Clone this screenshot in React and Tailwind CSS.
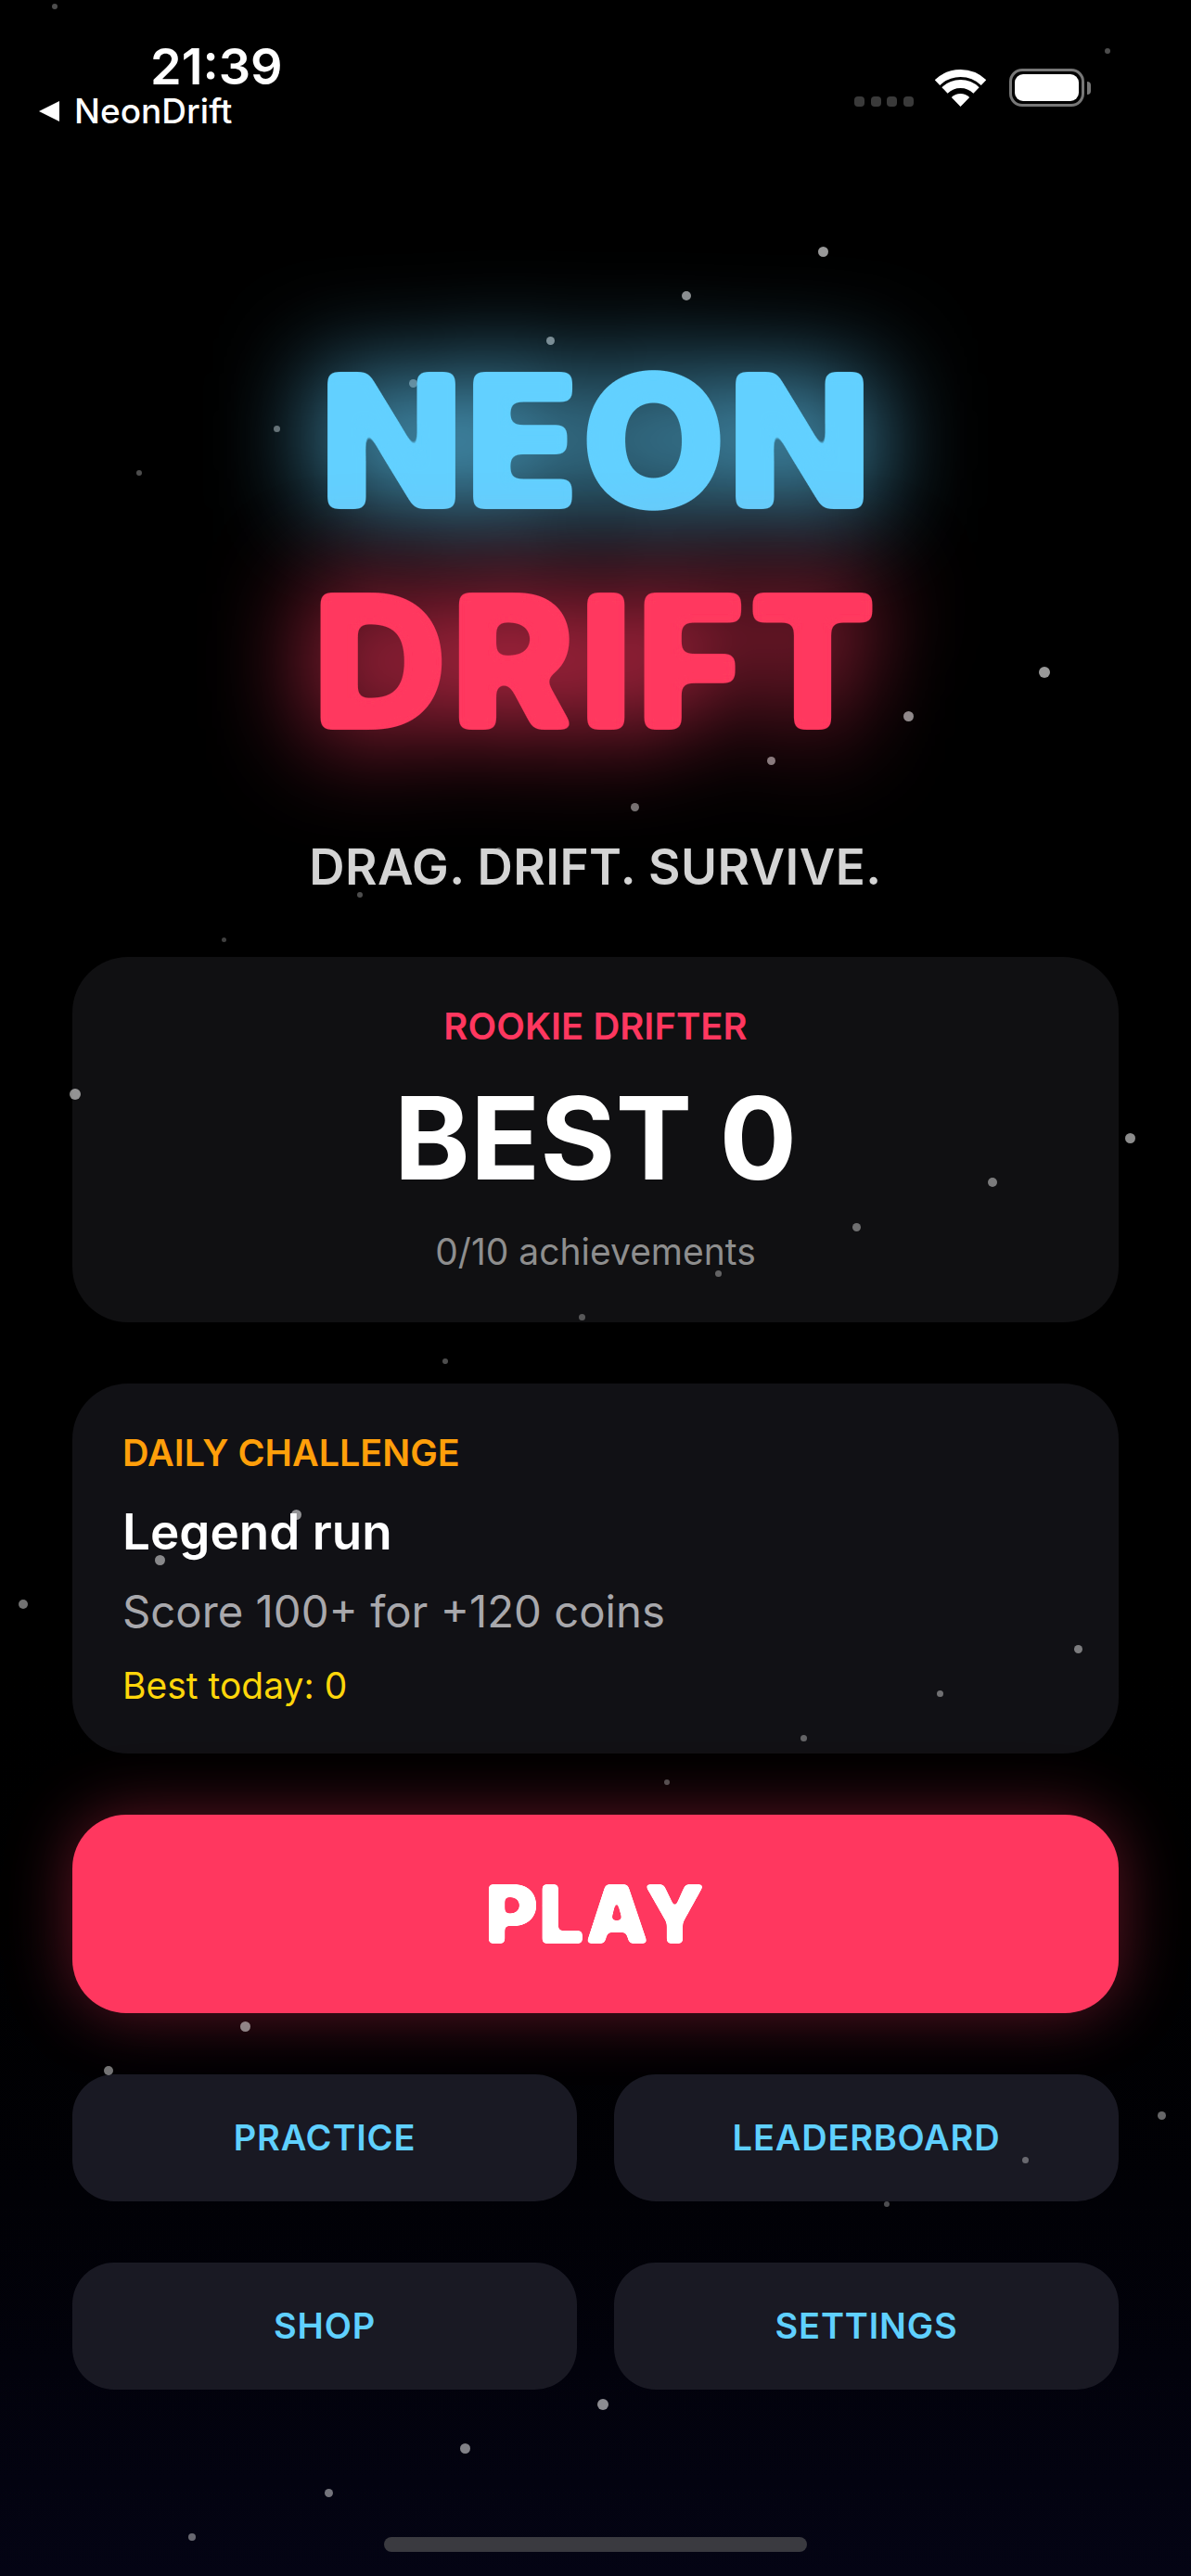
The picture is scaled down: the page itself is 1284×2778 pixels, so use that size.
import React from 'react';

const sans = "font-['Inter','Liberation_Sans',sans-serif]";

// [x, y, diameter, opacity] in page pixels
const dots = [
  [59, 7, 6, 0.3], [1194, 55, 6, 0.3], [887, 271, 11, 0.6], [740, 319, 10, 0.55], [593, 367, 9, 0.5],
  [445, 413, 9, 0.4], [298, 462, 7, 0.4], [150, 510, 6, 0.3], [1126, 725, 12, 0.6], [979, 772, 11, 0.55],
  [831, 820, 9, 0.5], [684, 870, 9, 0.45], [537, 917, 7, 0.35], [388, 965, 6, 0.3], [241, 1013, 5, 0.25],
  [81, 1180, 12, 0.55], [1218, 1227, 11, 0.55], [1070, 1275, 10, 0.45], [923, 1323, 9, 0.4], [774, 1373, 7, 0.35],
  [627, 1420, 7, 0.3], [480, 1468, 6, 0.3], [319, 1633, 11, 0.55], [172, 1682, 11, 0.5], [25, 1730, 10, 0.45],
  [1162, 1778, 9, 0.45], [1013, 1826, 7, 0.4], [866, 1874, 7, 0.35], [719, 1922, 6, 0.3], [264, 2185, 11, 0.5],
  [117, 2233, 10, 0.45], [1252, 2281, 9, 0.4], [1105, 2329, 7, 0.35], [956, 2377, 6, 0.3], [650, 2593, 12, 0.55],
  [501, 2640, 11, 0.5], [354, 2688, 9, 0.45], [207, 2736, 8, 0.4],
];

function Dot({ d }) {
  return (
    <div
      className="absolute z-[1] rounded-full bg-white"
      style={{ left: d[0] - d[2] / 2, top: d[1] - d[2] / 2, width: d[2], height: d[2], opacity: d[3] }}
    />
  );
}

function SmallButton({ label }) {
  return (
    <button className={`h-[137px] flex-1 rounded-[45px] bg-[#191923] text-[38px] font-semibold tracking-[0.8px] text-[#5fd0ff] ${sans}`}>
      <span className="relative z-[2]">{label}</span>
    </button>
  );
}

export default function App() {
  return (
    <div className={`relative h-[2778px] w-[1284px] overflow-hidden bg-gradient-to-b from-black from-60% to-[#040414] ${sans}`}>
      <svg className="absolute h-0 w-0">
        <filter id="round">
          <feGaussianBlur in="SourceGraphic" stdDeviation="6" />
          <feComponentTransfer>
            <feFuncA type="linear" slope="14" intercept="-6.5" />
          </feComponentTransfer>
        </filter>
        <filter id="round-small">
          <feGaussianBlur in="SourceGraphic" stdDeviation="2.5" />
          <feComponentTransfer>
            <feFuncA type="linear" slope="10" intercept="-4.5" />
          </feComponentTransfer>
        </filter>
      </svg>

      {dots.map((d, i) => <Dot key={i} d={d} />)}

      {/* status bar */}
      <div className="absolute left-[162px] top-[39px] text-[54px] font-semibold leading-[66px] text-white">21:39</div>
      <div className="absolute left-[41px] top-[100px] flex items-center gap-[15px] text-[37px] font-medium leading-[40px] text-white">
        <svg width="24" height="24" viewBox="0 0 24 24"><path d="M1 12 23 1v22z" fill="white" /></svg>
        <span>NeonDrift</span>
      </div>
      <div className="absolute left-[921px] top-[104px] flex gap-[6.5px]">
        <div className="h-[11px] w-[11px] rounded-[4px] bg-[#3a3a3a]" />
        <div className="h-[11px] w-[11px] rounded-[4px] bg-[#3a3a3a]" />
        <div className="h-[11px] w-[11px] rounded-[4px] bg-[#3a3a3a]" />
        <div className="h-[11px] w-[11px] rounded-[4px] bg-[#3a3a3a]" />
      </div>
      <svg className="absolute left-[1008px] top-[75px]" width="55" height="40" viewBox="0 0 55 40" fill="none">
        <path d="M2.5 14.1A36 36 0 0 1 52.5 14.1" stroke="white" strokeWidth="8" />
        <path d="M10.5 22.4A24.5 24.5 0 0 1 44.5 22.4" stroke="white" strokeWidth="9" />
        <path d="M27.5 40 17.8 30A14 14 0 0 1 37.2 30z" fill="white" />
      </svg>
      <div className="absolute left-[1088px] top-[74px] flex items-center">
        <div className="h-[41px] w-[81px] rounded-[14px] border-[3px] border-[#777] p-[3px]">
          <div className="h-full w-full rounded-[9px] bg-white" />
        </div>
        <div className="ml-[3px] h-[14px] w-[4px] rounded-r-full bg-[#777]" />
      </div>

      {/* page content */}
      <div className="flex flex-col items-center px-[78px] pt-[356px]">
        <h1 className="relative z-[2] m-0 text-[204px] font-black leading-[238px] text-[#62d0ff] [filter:drop-shadow(0_0_56px_rgba(98,208,255,1))]">
          <span className="[filter:url(#round)]">NEON</span>
        </h1>
        <h1 className="relative z-[2] m-0 text-[204px] font-black leading-[238px] tracking-[2px] text-[#ff375f] [filter:drop-shadow(0_0_56px_rgba(255,55,95,1))]">
          <span className="[filter:url(#round)]">DRIFT</span>
        </h1>
        <p className="relative z-[2] m-0 mt-[71px] text-[53px] font-semibold leading-[64px] tracking-[0.5px] text-[#d4d4d4]">DRAG. DRIFT. SURVIVE.</p>

        <div className="mt-[65px] flex h-[394px] w-full flex-col items-center rounded-[60px] bg-[#101012] pt-[53px]">
          <div className="relative z-[2] text-[40px] font-semibold leading-[44px] text-[#ff375f]">ROOKIE DRIFTER</div>
          <div className="relative z-[2] mt-[31px] text-[124px] font-bold leading-[134px] text-white">BEST 0</div>
          <div className="relative z-[2] mt-[34px] text-[39px] leading-[44px] text-[#8e8e8e]">0/10 achievements</div>
        </div>

        <div className="mt-[66px] flex h-[399px] w-full flex-col rounded-[60px] bg-[#111115] pl-[54px] pt-[53px]">
          <div className="relative z-[2] text-[39.5px] font-semibold leading-[44px] text-[#ff9f0a]">DAILY CHALLENGE</div>
          <div className="relative z-[2] mt-[31px] text-[53px] font-semibold leading-[64px] text-white">Legend run</div>
          <div className="relative z-[2] mt-[26px] text-[47.3px] leading-[56px] text-[#a8a8ac]">Score 100+ for +120 coins</div>
          <div className="relative z-[2] mt-[30px] text-[39px] leading-[44px] text-[#ffd60a]">Best today: 0</div>
        </div>

        <button className="mt-[66px] flex h-[214px] w-full items-center justify-center rounded-[58px] bg-[#ff375f] shadow-[0_0_70px_rgba(255,55,95,0.38)]">
          <span className="text-[88px] font-black text-white [filter:url(#round-small)]">PLAY</span>
        </button>

        <div className="mt-[66px] flex w-full gap-[40px]">
          <SmallButton label="PRACTICE" />
          <SmallButton label="LEADERBOARD" />
        </div>
        <div className="mt-[66px] flex w-full gap-[40px]">
          <SmallButton label="SHOP" />
          <SmallButton label="SETTINGS" />
        </div>
      </div>

      {/* home indicator */}
      <div className="absolute bottom-[26px] left-[414px] h-[16px] w-[456px] rounded-[8px] bg-[#3a3a40]" />
    </div>
  );
}
